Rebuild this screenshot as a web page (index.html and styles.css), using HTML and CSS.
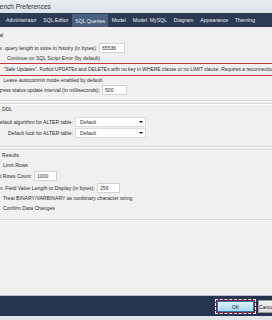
FILE: index.html
```
<!DOCTYPE html>
<html lang="en">

<head>
    <meta charset="UTF-8">
    <meta name="viewport" content="width=device-width, initial-scale=1.0">
    <title>Workbench Preferences</title>
    <link rel="stylesheet" href="styles.css">
</head>

<body>
    <div class="window">
        <div class="titlebar"><span class="title">Workbench Preferences</span></div>
        <div class="tabs">
            <span class="tab">Administrator</span>
            <span class="tab">SQL Editor</span>
            <span class="tab active">SQL Queries</span>
            <span class="tab">Model</span>
            <span class="tab">Model: MySQL</span>
            <span class="tab">Diagram</span>
            <span class="tab">Appearance</span>
            <span class="tab">Theming</span>
        </div>

        <main class="content">
            <div class="group-title general">General</div>
            <div class="field history">
                <div class="label"><span>Max. query length to store in history (in bytes):</span></div>
                <div class="input w26">65536</div>
            </div>
            <div class="check indent">Continue on SQL Script Error (by default)</div>
            <div class="marked">
                <div class="check">“Safe Updates”. Forbid UPDATEs and DELETEs with no key in WHERE clause or no LIMIT clause. Requires a reconnection.</div>
            </div>
            <div class="check leave">Leave autocommit mode enabled by default</div>
            <div class="field progress">
                <div class="label"><span>Progress status update interval (in milliseconds):</span></div>
                <div class="input w25">500</div>
            </div>

            <div class="sep"></div>
            <div class="sep"></div>
            <div class="group-title">DDL</div>
            <div class="field algo">
                <div class="label"><span>Default algorithm for ALTER table:</span></div>
                <div class="select">Default<span class="arrow"></span></div>
            </div>
            <div class="field lock">
                <div class="label"><span>Default lock for ALTER table:</span></div>
                <div class="select">Default<span class="arrow"></span></div>
            </div>

            <div class="sep gap"></div>
            <div class="sep"></div>
            <div class="group-title">Results</div>
            <div class="check limit">Limit Rows</div>
            <div class="field rows">
                <div class="label"><span>Limit Rows Count:</span></div>
                <div class="input w23">1000</div>
            </div>
            <div class="field blob">
                <div class="label"><span>Max. Field Value Length to Display (in bytes):</span></div>
                <div class="input w23">256</div>
            </div>
            <div class="check treat">Treat BINARY/VARBINARY as nonbinary character string</div>
            <div class="check confirm">Confirm Data Changes</div>
            <div class="sep end"></div>
        </main>

        <div class="footer">
            <div class="focus"><button class="btn ok">OK</button></div>
            <button class="btn cancel">Cancel</button>
        </div>
    </div>
</body>

</html>
```

FILE: styles.css
```
* {
    margin: 0;
    padding: 0;
    box-sizing: border-box;
}

body {
    width: 272px;
    height: 320px;
    overflow: hidden;
    background-color: #f0f0f0;
    font-family: "Liberation Sans", Arial, sans-serif;
    font-size: 5.1px;
    color: #2b2b2b;
}

.window {
    height: 320px;
    display: flex;
    flex-direction: column;
}

.titlebar {
    height: 13px;
    display: flex;
    align-items: center;
    background: linear-gradient(#e9eef4, #dce3eb);
    white-space: nowrap;
}

.title {
    margin-left: -18.8px;
    font-size: 6.5px;
    color: #333;
}

.tabs {
    height: 14px;
    display: flex;
    align-items: stretch;
    padding-left: 2.5px;
    background-color: #2c3b54;
    white-space: nowrap;
}

.tab {
    display: flex;
    align-items: center;
    padding: 0 3.4px;
    font-size: 5.2px;
    color: #e6ebf2;
}

.tab.active {
    background-color: #4b5f7f;
    margin-top: 1px;
}

.content {
    white-space: nowrap;
}

.group-title {
    height: 8px;
    line-height: 8px;
    padding-left: 2px;
}

.group-title.general {
    height: 10px;
    line-height: 10px;
    margin-top: 3px;
    padding-left: 0;
    margin-left: -15px;
}

.field {
    height: 10px;
    display: flex;
    align-items: center;
    gap: 2px;
}

.field .label {
    display: flex;
    justify-content: flex-end;
}

.history {
    margin-top: 3px;
}

.history .label {
    width: 97px;
}

.progress {
    margin-top: 1px;
}

.progress .label {
    width: 100px;
}

.input {
    height: 10px;
    line-height: 8px;
    padding-left: 2px;
    background-color: #fff;
    border: 1px solid #d2d2d2;
}

.w26 {
    width: 26px;
}

.w25 {
    width: 25px;
}

.w23 {
    width: 23px;
}

.check {
    height: 8px;
    line-height: 8px;
    padding-left: 3.5px;
}

.check.indent {
    height: 9px;
    line-height: 9px;
    margin-top: 1px;
    padding-left: 7px;
}

.marked {
    height: 13px;
    display: flex;
    align-items: center;
    font-size: 4.95px;
    border-top: 1px solid #c8323c;
    border-bottom: 1px solid #c8323c;
}

.sep {
    height: 2px;
    border-top: 1px solid #d6d6d6;
    border-bottom: 1px solid #fbfbfb;
    margin-top: 1px;
}

.progress + .sep {
    margin-top: 5px;
}

.sep.gap {
    margin-top: 8px;
}

.algo {
    margin-top: 4px;
}

.lock {
    margin-top: 1px;
}

.algo .label,
.lock .label {
    width: 73px;
}

.select {
    width: 71px;
    height: 10px;
    display: flex;
    align-items: center;
    justify-content: space-between;
    padding: 0 2px 0 4px;
    background-color: #fff;
    border: 1px solid #dcdcdc;
}

.arrow {
    width: 0;
    height: 0;
    border-left: 2px solid transparent;
    border-right: 2px solid transparent;
    border-top: 2.5px solid #111;
}

.check.limit {
    margin-top: 2px;
    padding-left: 3px;
}

.rows {
    margin-top: 2px;
}

.rows .label {
    width: 32px;
}

.blob {
    margin-top: 2px;
}

.blob .label {
    width: 95px;
}

.check.treat {
    margin-top: 1px;
    padding-left: 3px;
}

.check.confirm {
    margin-top: 2px;
    padding-left: 3px;
}

.sep.end {
    margin-top: 7px;
}

.footer {
    margin-top: auto;
    height: 25px;
    display: flex;
    align-items: flex-start;
    gap: 2px;
    padding: 3px 0 0 215px;
    background-color: #26344d;
    border-top: 1px solid #b8c0cc;
    border-bottom: 4px solid #e1e4e9;
}

.focus {
    padding: 1px;
    background-color: #6a2343;
    border: 1px dashed #f4e6ee;
}

.btn {
    font-family: "Liberation Sans", Arial, sans-serif;
    font-size: 5.1px;
    color: #222;
    height: 11px;
}

.ok {
    width: 37px;
    display: block;
    background: linear-gradient(#dcf2fc, #a5daf2);
    border: 1px solid #3a78a8;
}

.cancel {
    width: 40px;
    height: 13px;
    margin-top: 1px;
    background: linear-gradient(#f2f2f2, #dedede);
    border: 1px solid #9a9a9a;
}
```
